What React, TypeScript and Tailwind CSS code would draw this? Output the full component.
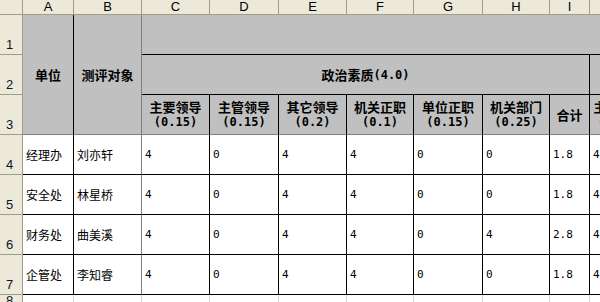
const cjk = '"Noto Sans CJK SC", "Liberation Sans", sans-serif';
const mono = '"DejaVu Sans Mono", "Liberation Mono", monospace';

const letters = ['A', 'B', 'C', 'D', 'E', 'F', 'G', 'H', 'I', 'J'];

const subHeads = [
  ['主要领导', '(0.15)'],
  ['主管领导', '(0.15)'],
  ['其它领导', '(0.2)'],
  ['机关正职', '(0.1)'],
  ['单位正职', '(0.15)'],
  ['机关部门', '(0.25)'],
];

const rows = [
  { n: '4', unit: '经理办', name: '刘亦轩', vals: ['4', '0', '4', '4', '0', '0', '1.8', '4'] },
  { n: '5', unit: '安全处', name: '林星桥', vals: ['4', '0', '4', '4', '0', '0', '1.8', '4'] },
  { n: '6', unit: '财务处', name: '曲美溪', vals: ['4', '0', '4', '4', '0', '4', '2.8', '4'] },
  { n: '7', unit: '企管处', name: '李知睿', vals: ['4', '0', '4', '4', '0', '0', '1.8', '4'] },
];

function RowHead({ n }: { n: string }) {
  return (
    <div className="flex items-end justify-center pr-[3px] pb-[2px] bg-[#ECE9D8] border-r border-b border-[#9D9D8A] text-[13px] leading-[14px] text-[#101030]"
      style={{ fontFamily: '"Liberation Sans", sans-serif' }}>
      {n}
    </div>
  );
}

function SubHead({ top, bottom }: { top: string; bottom: string }) {
  return (
    <div className="flex flex-col items-center justify-center gap-[1px] bg-[#C0C0C0] border-r border-b border-r-black border-b-[#808080] font-bold whitespace-nowrap">
      <span className="block h-[15px] text-[13px] leading-[15px]">{top}</span>
      <span style={{ fontFamily: mono }} className="block h-[15px] text-[12px] leading-[15px]">{bottom}</span>
    </div>
  );
}

export default function App() {
  return (
    <div className="w-[600px] h-[302px] overflow-hidden bg-white text-black" style={{ fontFamily: cjk }}>
      <div className="grid grid-cols-[23px_51px_68px_68px_69px_68px_67px_69px_67px_40px_60px] grid-rows-[15px_40px_40px_40px_40px_40px_40px_40px_16px] w-[650px]">
        {/* column letters */}
        <div className="bg-[#ECE9D8] border-r border-b border-[#9D9D8A]" />
        {letters.map((l) => (
          <div
            key={l}
            className="flex items-center justify-center bg-[#ECE9D8] border-r border-b border-[#9D9D8A] text-[13px] leading-[14px]"
            style={{ fontFamily: '"Liberation Sans", sans-serif' }}
          >
            {l}
          </div>
        ))}

        {/* row 1 */}
        <RowHead n="1" />
        <div className="row-span-3 flex items-center justify-center bg-[#C0C0C0] border-r border-b border-r-black border-b-[#808080] text-[13px] font-bold">
          单位
        </div>
        <div className="row-span-3 flex items-center justify-center bg-[#C0C0C0] border-r border-b border-[#808080] text-[13px] font-bold">
          测评对象
        </div>
        <div className="col-span-8 bg-[#C0C0C0] border-b border-black" />

        {/* row 2 */}
        <RowHead n="2" />
        <div className="col-span-7 flex items-center justify-center bg-[#C0C0C0] border-r border-b border-black text-[13px] font-bold whitespace-nowrap">
          政治素质<span style={{ fontFamily: mono }} className="text-[12px]">(4.0)</span>
        </div>
        <div className="bg-[#C0C0C0] border-b border-black" />

        {/* row 3 */}
        <RowHead n="3" />
        {subHeads.map(([t, b]) => (
          <SubHead key={t} top={t} bottom={b} />
        ))}
        <div className="flex items-center justify-center bg-[#C0C0C0] border-r border-b border-r-black border-b-[#808080] text-[13px] font-bold">
          合计
        </div>
        <SubHead top="主要领导" bottom="(0.15)" />

        {/* data rows */}
        {rows.map((r) => [
          <RowHead key={r.n + 'h'} n={r.n} />,
          <div key={r.n + 'a'} className="flex items-center pl-[3px] border-r border-b border-black text-[12px]">
            {r.unit}
          </div>,
          <div key={r.n + 'b'} className="flex items-center pl-[3px] border-r border-b border-r-[#808080] border-b-black text-[12px]">
            {r.name}
          </div>,
          ...r.vals.map((v, i) => (
            <div
              key={r.n + 'v' + i}
              className="flex items-center pl-[3px] pt-[2px] border-r border-b border-black text-[11px]"
              style={{ fontFamily: mono }}
            >
              {v}
            </div>
          )),
        ])}

        {/* row 8 */}
        <RowHead n="8" />
        {letters.map((l) => (
          <div key={'e' + l} className="border-r border-b border-[#D4D0C8]" />
        ))}
      </div>
    </div>
  );
}
